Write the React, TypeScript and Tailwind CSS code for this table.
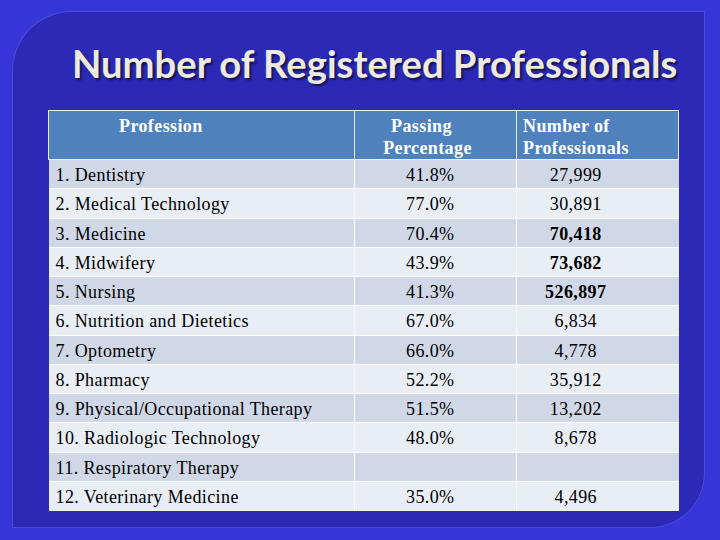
const rows = [
  { name: "1. Dentistry", pct: "41.8%", num: "27,999", bold: false },
  { name: "2. Medical Technology", pct: "77.0%", num: "30,891", bold: false },
  { name: "3. Medicine", pct: "70.4%", num: "70,418", bold: true },
  { name: "4. Midwifery", pct: "43.9%", num: "73,682", bold: true },
  { name: "5. Nursing", pct: "41.3%", num: "526,897", bold: true },
  { name: "6. Nutrition and Dietetics", pct: "67.0%", num: "6,834", bold: false },
  { name: "7. Optometry", pct: "66.0%", num: "4,778", bold: false },
  { name: "8. Pharmacy", pct: "52.2%", num: "35,912", bold: false },
  { name: "9. Physical/Occupational Therapy", pct: "51.5%", num: "13,202", bold: false },
  { name: "10. Radiologic Technology", pct: "48.0%", num: "8,678", bold: false },
  { name: "11. Respiratory Therapy", pct: "", num: "", bold: false },
  { name: "12. Veterinary Medicine", pct: "35.0%", num: "4,496", bold: false },
];

export default function App() {
  return (
    <div className="w-[720px] h-[540px] bg-[#3535d8] pt-[11px] pl-[12px] pr-[15px] pb-[12px] overflow-hidden">
      <div className="h-full bg-[#2b29b6] rounded-tl-[60px] rounded-br-[55px] border border-[#5a5ae8]/70">
        <h1 className="pt-[29px] pl-[59px] text-[38.2px] leading-[44px] whitespace-nowrap font-bold text-[#efeadf] [font-family:Lato,'Open_Sans',sans-serif] [text-shadow:2px_2px_2px_rgba(0,0,0,0.55)]">
          Number of Registered Professionals
        </h1>
        <table className="mt-[25px] ml-[35px] w-[630px] table-fixed border-collapse [font-family:'Liberation_Serif',serif] text-[18px] leading-[22px] tracking-[0.4px]">
          <colgroup>
            <col className="w-[306px]" />
            <col className="w-[162px]" />
            <col className="w-[162px]" />
          </colgroup>
          <thead>
            <tr className="h-[49px] bg-[#4f81bd] text-white font-bold align-top">
              <th className="border border-[#e8eef8] pl-[70px] pt-[4px] text-left font-bold">Profession</th>
              <th className="border border-[#e8eef8] pt-[4px] text-center font-bold">
                <div className="pr-[28px]">Passing</div>
                <div className="pr-[16px]">Percentage</div>
              </th>
              <th className="border border-[#e8eef8] pl-[6px] pt-[4px] text-left font-bold">Number of<br />Professionals</th>
            </tr>
          </thead>
          <tbody className="text-black">
            {rows.map((r, i) => (
              <tr key={i} className={`h-[29.25px] ${i % 2 === 0 ? "bg-[#d0d8e8]" : "bg-[#e9edf4]"}`}>
                <td className="border-t border-r border-white pl-[7px] pt-[2px]">{r.name}</td>
                <td className="border-t border-r border-white pl-[51px] pt-[2px]">{r.pct}</td>
                <td className={`border-t border-white pr-[44px] pt-[2px] text-center ${r.bold ? "font-bold" : ""}`}>{r.num}</td>
              </tr>
            ))}
          </tbody>
        </table>
      </div>
    </div>
  );
}
